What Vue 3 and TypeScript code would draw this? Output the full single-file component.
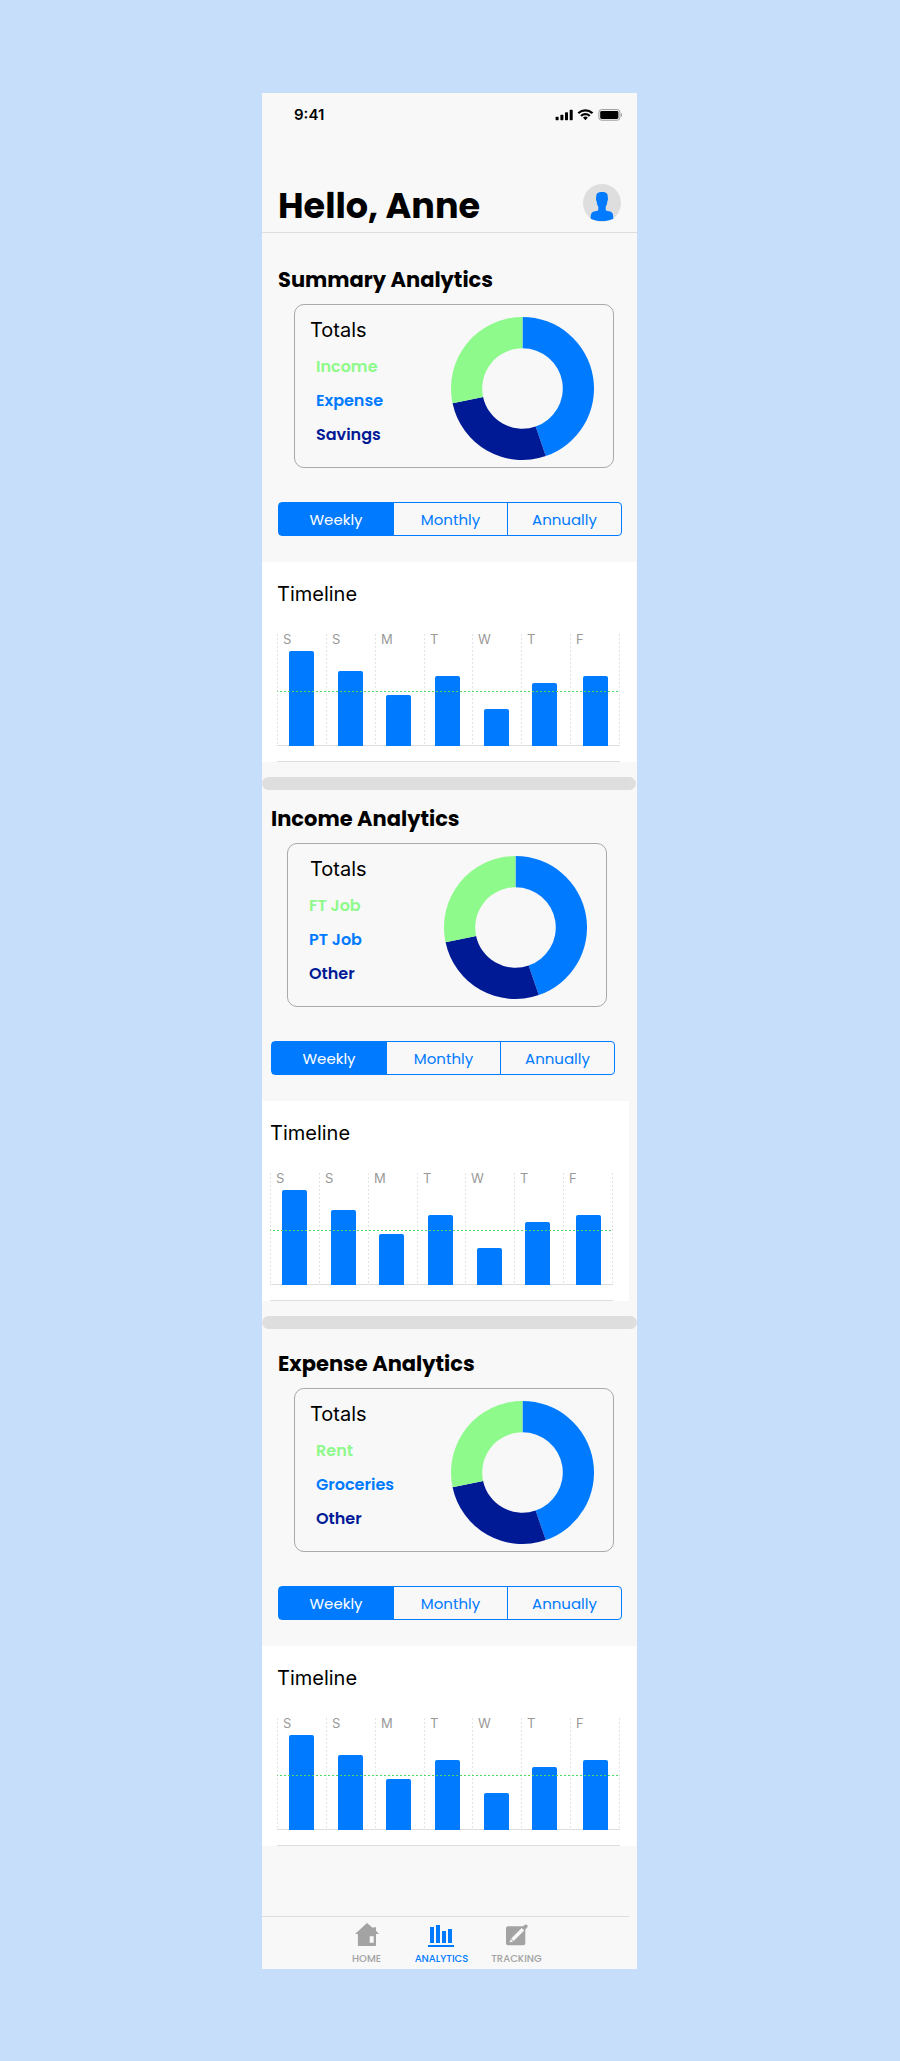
<script setup lang="ts">
import { ref } from 'vue'

interface Section {
  id: string
  title: string
  labels: string[]
}

interface Day {
  label: string
  grid: number
  bar: number
  value: number
}

const sections: Section[] = [
  { id: 'summary', title: 'Summary Analytics', labels: ['Income', 'Expense', 'Savings'] },
  { id: 'income', title: 'Income Analytics', labels: ['FT Job', 'PT Job', 'Other'] },
  { id: 'expense', title: 'Expense Analytics', labels: ['Rent', 'Groceries', 'Other'] },
]

const periods = ['Weekly', 'Monthly', 'Annually']
const selected = ref<string[]>(sections.map(() => 'Weekly'))

const days: Day[] = [
  { label: 'S', grid: 0, bar: 12, value: 95 },
  { label: 'S', grid: 49, bar: 61, value: 75 },
  { label: 'M', grid: 98, bar: 109, value: 51 },
  { label: 'T', grid: 147, bar: 158, value: 70 },
  { label: 'W', grid: 195, bar: 207, value: 37 },
  { label: 'T', grid: 244, bar: 255, value: 63 },
  { label: 'F', grid: 293, bar: 306, value: 70 },
]

const gridLines = [...days.map((d) => d.grid), 342]

function point(radius: number, degrees: number): string {
  const a = (degrees * Math.PI) / 180
  return `${(71 + radius * Math.sin(a)).toFixed(2)} ${(71 - radius * Math.cos(a)).toFixed(2)}`
}

function slice(from: number, to: number): string {
  const outer = 71
  const inner = 40
  return `M${point(outer, from)}A${outer} ${outer} 0 0 1 ${point(outer, to)}L${point(inner, to)}A${inner} ${inner} 0 0 0 ${point(inner, from)}Z`
}

const slices = [
  { path: slice(0, 161), tone: 'blue' },
  { path: slice(161, 258), tone: 'navy' },
  { path: slice(258, 360), tone: 'green' },
]
const tones = ['green', 'blue', 'navy']
</script>

<template>
  <div class="page">
    <div class="phone">
      <header class="header">
        <div class="status">
          <span class="time">9:41</span>
          <svg class="status-icons" width="67" height="12" viewBox="0 0 67 12" aria-hidden="true">
            <rect x="0.6" y="7.7" width="3" height="3.5" rx="0.7" />
            <rect x="5.4" y="5.8" width="3" height="5.4" rx="0.7" />
            <rect x="10" y="3.2" width="3" height="8" rx="0.7" />
            <rect x="14.7" y="0.7" width="3" height="10.5" rx="0.7" />
            <path
              transform="translate(22.7 0.2) scale(0.9)"
              d="M8.57 2.47c2.49 0 4.88.96 6.68 2.67.13.13.35.13.49 0l1.29-1.31a.35.35 0 000-.49 12.2 12.2 0 00-16.92 0 .35.35 0 000 .49l1.3 1.31c.13.13.35.13.48 0 1.8-1.72 4.19-2.67 6.68-2.67zM8.57 6.75c1.37 0 2.69.51 3.7 1.44.14.13.35.13.49 0l1.29-1.32a.36.36 0 000-.5 7.96 7.96 0 00-10.95 0 .36.36 0 000 .5l1.29 1.32c.14.13.35.13.49 0a5.43 5.43 0 013.69-1.44zM11.1 9.63c.1-.1.1-.26 0-.35a3.96 3.96 0 00-5.06 0c-.1.09-.1.25 0 .35l2.28 2.3c.14.14.36.14.49 0z"
            />
            <rect class="battery" x="43.9" y="0.6" width="21" height="10.6" rx="2.6" />
            <rect x="45.2" y="2" width="18.2" height="7.9" rx="1.4" />
            <path class="battery-cap" d="M66 4v4c.7-.3 1-1.1 1-2s-.3-1.7-1-2z" />
          </svg>
        </div>
        <div class="greeting">
          <h1>Hello, Anne</h1>
          <button class="avatar" type="button" aria-label="Profile">
            <svg width="38" height="38" viewBox="0 0 38 38" aria-hidden="true">
              <circle cx="19" cy="19" r="19" fill="#dedede" />
              <path
                fill="#007aff"
                d="M13.300 13C13 9.500 14.600 8 19 8s6 1.500 5.700 5c.5 1 .4 3.200-.4 4.600-.2 2.600-.8 4.200-1.600 5v3c0 1.100 1.300 1.400 3.200 1.700 3.300.5 4.400 2 4.400 7.400C27 36.200 23 37 19 37s-8-.8-11.300-2.300c0-5.400 1.100-6.900 4.400-7.400 1.900-.3 3.200-.6 3.200-1.700v-3c-.8-.8-1.400-2.400-1.600-5-.8-1.400-.9-3.600-.4-4.600z"
              />
            </svg>
          </button>
        </div>
      </header>

      <main>
        <template v-for="(section, index) in sections" :key="section.id">
          <div v-if="index > 0" class="separator" :class="{ full: index > 1 }"></div>
          <section class="section" :class="section.id">
            <h2>{{ section.title }}</h2>
            <div class="card">
              <div class="totals">
                <h3>Totals</h3>
                <ul>
                  <li v-for="(label, i) in section.labels" :key="label" :class="tones[i]">{{ label }}</li>
                </ul>
              </div>
              <svg class="donut" width="143" height="143" viewBox="0 0 142 142" aria-hidden="true">
                <path v-for="s in slices" :key="s.tone" :class="s.tone" :d="s.path" />
              </svg>
            </div>

            <div class="segments" role="group" :aria-label="section.title + ' period'">
              <button
                v-for="period in periods"
                :key="period"
                type="button"
                :class="{ active: selected[index] === period }"
                :aria-pressed="selected[index] === period"
                @click="selected[index] = period"
              >{{ period }}</button>
            </div>

            <div class="timeline">
              <h3>Timeline</h3>
              <svg class="chart" width="343" height="134" viewBox="0 -6 343 134" role="img" aria-label="Timeline chart">
                <rect class="rule" x="0" y="111" width="343" height="1" />
                <path v-for="x in gridLines" :key="x" class="grid-line" :d="`M${x} 0V111`" transform="translate(0.5 0)" />
                <g v-for="day in days" :key="day.grid">
                  <text :x="day.grid + 6" y="10">{{ day.label }}</text>
                  <path
                    class="blue"
                    :d="`M${day.bar} 112v${2 - day.value}q0 -2 2 -2h21q2 0 2 2v${day.value - 2}z`"
                  />
                </g>
                <path class="average" d="M0 57.5H343" />
                <rect class="rule" x="0" y="127" width="343" height="1" />
              </svg>
            </div>
          </section>
        </template>
      </main>

      <nav class="tabs" aria-label="Main">
        <a href="#home">
          <svg width="26" height="24" viewBox="-1 0 26 24" aria-hidden="true">
            <path
              fill-rule="evenodd"
              d="M12 0l6.200 5.300V4.200H21v3.600L24 11h-3v11.200a.8.8 0 01-.8.8H3.700a.8.8 0 01-.8-.8V11H0zM14.700 13.200v6.600h4v-6.600z"
            />
          </svg>
          <span>HOME</span>
        </a>
        <a href="#analytics" class="current" aria-current="page">
          <svg width="28" height="24" viewBox="0 -2 28 24" aria-hidden="true">
            <path d="M2 2h4v16H2zM8 0h4v18H8zM14 6h4v12h-4zM20 4h4v14h-4zM0 20h26v2H0z" />
          </svg>
          <span>ANALYTICS</span>
        </a>
        <a href="#tracking">
          <svg width="26" height="24" viewBox="-2 -1 26 24" aria-hidden="true">
            <rect x="0" y="2.3" width="19.3" height="19" rx="2" />
            <path class="pencil" d="M5.200 14.600L15.700 4l2.500 2.500L7.700 17z" />
            <path class="pencil" d="M4.600 15.200l2.500 2.400-3.500 1z" />
            <path d="M16.400 3.200l1.700-1.900c.9-1.100 2.200-1.200 3-.3.900.9.700 2-.3 3L19 5.700z" />
          </svg>
          <span>TRACKING</span>
        </a>
      </nav>
    </div>
  </div>
</template>

<style>
body {
  background: #c7defb;
}
</style>

<style scoped>
.page {
  display: flex;
  justify-content: center;
  padding: 93px 16px 92px;
  padding-left: 15px;
  background: #c7defb;
  font-family: Inter, "Liberation Sans", sans-serif;
  color: #000;
}
.phone {
  width: 100%;
  max-width: 375px;
  background: #f8f8f8;
}
h1,
h2,
h3,
ul {
  margin: 0;
  padding: 0;
}
button {
  margin: 0;
  padding: 0;
  border: 0;
  background: none;
  font-family: Poppins, Inter, sans-serif;
  cursor: pointer;
}
.header {
  border-bottom: 1px solid #dedede;
  padding: 12px 15px 5px 16px;
}
.status {
  display: flex;
  justify-content: space-between;
  align-items: center;
  height: 20px;
  padding-left: 16px;
  margin-bottom: 59px;
}
.time {
  font-size: 15px;
  font-weight: 600;
  line-height: 20px;
}
.battery {
  fill: none;
  stroke: #9a9a9a;
}
.battery-cap {
  fill: #9a9a9a;
}
.greeting {
  display: flex;
  justify-content: space-between;
  align-items: flex-start;
  padding-right: 1px;
}
h1 {
  padding-top: 1px;
  font: 700 35px/42px Poppins, Inter, sans-serif;
}
.avatar,
.avatar svg {
  display: block;
  height: 38px;
}
.section {
  padding-top: 32px;
}
.section.income {
  padding-top: 14px;
}
.section.expense {
  padding-top: 20px;
}
h2 {
  padding-left: 16px;
  font: 700 21px/30px Poppins, Inter, sans-serif;
}
.card {
  display: flex;
  justify-content: space-between;
  align-items: flex-start;
  box-sizing: border-box;
  height: 164px;
  margin: 9px 23px 0 32px;
  padding: 12px 19px 0 15px;
  border: 1px solid #a9a9a9;
  border-radius: 10px;
}
h3 {
  font-size: 20px;
  font-weight: 400;
  line-height: 26px;
}
ul {
  padding: 7px 0 0 6px;
  list-style: none;
}
li {
  font: 600 16px/34px Poppins, Inter, sans-serif;
}
.green {
  color: #8dfa8b;
  fill: #8dfa8b;
}
.blue {
  color: #007aff;
  fill: #007aff;
}
.navy {
  color: #001a96;
  fill: #001a96;
}
.segments {
  display: grid;
  grid-template-columns: 114px 1fr 1fr;
  height: 34px;
  box-sizing: border-box;
  margin: 34px 15px 0 16px;
  border: 1px solid #007aff;
  border-radius: 4px;
}
.segments button {
  color: #007aff;
  font-size: 15px;
}
.segments button + button {
  border-left: 1px solid #007aff;
}
.segments .active {
  background: #007aff;
  color: #fff;
}
.timeline {
  margin: 26px 1px 0 0;
  padding: 19px 0 0 15px;
  background: #fff;
}
.chart {
  display: block;
  margin-top: 21px;
}
.chart text {
  fill: #999;
  font-size: 13px;
}
.rule {
  fill: #dedede;
}
.grid-line {
  stroke: #e4e4e4;
  stroke-dasharray: 2 2;
}
.average {
  stroke: #4cd964;
  stroke-dasharray: 2 2;
  stroke-dashoffset: 1;
}
.income h2 {
  padding-left: 9px;
}
.income .card {
  margin-left: 25px;
  margin-right: 30px;
}
.income .totals h3 {
  padding-left: 7px;
}
.income .segments {
  margin-left: 9px;
  margin-right: 22px;
}
.income .timeline {
  margin-right: 8px;
  padding-left: 8px;
}
.separator {
  height: 13px;
  margin: 15px 1px 0 0;
  border-radius: 7px;
  background: #dedede;
}
.separator.full {
  margin-right: 0;
}
.tabs {
  display: grid;
  grid-template-columns: repeat(3, 75px);
  margin: 70px 8px 0 0;
  padding: 6px 0 4px 67px;
  border-top: 1px solid #dedede;
}
.tabs a {
  display: flex;
  flex-direction: column;
  align-items: center;
  gap: 6px;
  color: #a3a3a3;
  font: 500 10px/12px Poppins, Inter, sans-serif;
  text-decoration: none;
}
.tabs .current {
  color: #007aff;
}
.tabs svg {
  fill: currentColor;
}
.tabs .pencil {
  fill: #f8f8f8;
}
</style>
